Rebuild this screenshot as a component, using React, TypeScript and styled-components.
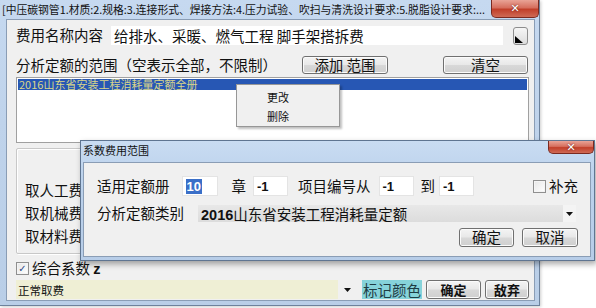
import React from "react";
import styled, { createGlobalStyle } from "styled-components";

const Global = createGlobalStyle`
  html, body { margin: 0; padding: 0; background: #ffffff; }
  body { font-family: "Noto Sans CJK SC", "Noto Sans", sans-serif; }
  * { box-sizing: border-box; }
`;

const FONT = `"Noto Sans CJK SC", "Noto Sans", sans-serif`;

const Stage = styled.div`
  position: relative;
  width: 596px;
  height: 308px;
  overflow: hidden;
  background: #ffffff;
`;

const MainWindow = styled.div`
  width: 540px;
  height: 306px;
  display: flex;
  flex-direction: column;
  background: linear-gradient(180deg, #c6d9f0 0%, #bfd3eb 40%, #b9cee7 100%);
  border-right: 1px solid #6d829c;
  border-bottom: 1px solid #6d829c;
  box-shadow: 1px 1px 3px rgba(0, 0, 0, 0.2);
`;

const TitleBar = styled.div`
  height: 19px;
  display: flex;
  align-items: flex-start;
  padding-left: 2px;
  flex-shrink: 0;
`;

const TitleText = styled.div<{ $size: number }>`
  flex: 1;
  min-width: 0;
  font-family: ${FONT};
  font-size: ${(p) => p.$size}px;
  line-height: 16px;
  color: #111;
  white-space: nowrap;
  overflow: hidden;
  padding-top: 1px;
`;

const CloseBtn = styled.div<{ $w: number; $h: number }>`
  width: ${(p) => p.$w}px;
  height: ${(p) => p.$h}px;
  flex-shrink: 0;
  border: 1px solid #7a2a20;
  border-top: none;
  border-radius: 0 0 5px 5px;
  background: linear-gradient(180deg, #e9a396 0%, #d66f5e 45%, #c13f2a 55%, #cf6a55 100%);
  display: flex;
  align-items: center;
  justify-content: center;
  color: #fff;
  font-family: "DejaVu Sans", sans-serif;
  font-weight: bold;
  font-size: 11px;
  line-height: 1;
  text-shadow: 0 0 2px #5a1a10;
`;

const Client = styled.div`
  flex: 1;
  margin: 0 4px 4px 6px;
  background: #f0f0f0;
  border: 1px solid #8a9db5;
  padding: 4px 6px 0 9px;
  display: flex;
  flex-direction: column;
`;

const Label = styled.span<{ $size?: number; $ml?: number }>`
  font-family: ${FONT};
  font-size: ${(p) => p.$size ?? 14.5}px;
  margin-left: ${(p) => p.$ml ?? 0}px;
  color: #111;
  white-space: nowrap;
  line-height: 1;
  flex-shrink: 0;
  b {
    font-family: "Liberation Sans", sans-serif;
    font-weight: bold;
  }
`;

const Row = styled.div<{ $mt: number; $h: number }>`
  display: flex;
  align-items: center;
  margin-top: ${(p) => p.$mt}px;
  height: ${(p) => p.$h}px;
  flex-shrink: 0;
`;

const TextField = styled.div<{ $w: number; $ml: number }>`
  width: ${(p) => p.$w}px;
  height: 100%;
  margin-left: ${(p) => p.$ml}px;
  background: #fff;
  border: 1px solid #f0f0f0;
  display: flex;
  align-items: center;
  padding-left: 3px;
  font-family: ${FONT};
  font-size: 14.5px;
  color: #111;
  white-space: nowrap;
  flex-shrink: 0;
`;

const DotButton = styled.div`
  width: 15px;
  height: 18px;
  margin-left: 9px;
  border: 1px solid #8d8d8d;
  border-radius: 3px;
  background: linear-gradient(180deg, #f6f6f6, #dcdcdc);
  position: relative;
  overflow: hidden;
  flex-shrink: 0;
`;

const Spacer = styled.div`
  flex: 1;
`;

const PushButton = styled.div<{ $w: number; $ml?: number; $bold?: boolean; $size?: number }>`
  width: ${(p) => p.$w}px;
  height: 100%;
  margin-left: ${(p) => p.$ml ?? 0}px;
  flex-shrink: 0;
  border: 1px solid #707070;
  border-radius: 3px;
  background: linear-gradient(180deg, #f4f4f4 0%, #e8e8e8 48%, #d8d8d8 52%, #cfcfcf 100%);
  box-shadow: inset 0 0 0 1px #fbfbfb;
  display: flex;
  align-items: center;
  justify-content: center;
  font-family: ${FONT};
  font-size: ${(p) => p.$size ?? 14.5}px;
  font-weight: ${(p) => (p.$bold ? 700 : 400)};
  color: #111;
  white-space: nowrap;
  line-height: 1;
`;

const ListBox = styled.div`
  margin-top: 3px;
  width: 513px;
  height: 66px;
  flex-shrink: 0;
  background: #fff;
  border: 1px solid #a0a0a0;
  padding: 1px;
`;

const ListItem = styled.div<{ $selected?: boolean }>`
  height: 11px;
  background: ${(p) => (p.$selected ? "#2757b4" : "transparent")};
  color: ${(p) => (p.$selected ? "#d9d58a" : "#111")};
  font-family: ${FONT};
  font-size: 11px;
  line-height: 11px;
  padding-left: 1px;
  white-space: nowrap;
`;

const GroupBox = styled.div`
  margin-top: 5px;
  width: 513px;
  height: 106px;
  flex-shrink: 0;
  border: 1px solid #c8c8c8;
  box-shadow: inset 1px 1px 0 #fff, 1px 1px 0 #fff;
  border-radius: 2px;
  padding: 30px 0 0 8px;
  display: flex;
  flex-direction: column;
`;

const GroupLine = styled.div`
  height: 23px;
  display: flex;
  align-items: center;
`;

const CheckBox = styled.div`
  width: 13px;
  height: 13px;
  border: 1px solid #8f8f8f;
  background: linear-gradient(135deg, #e6e6e6, #ffffff);
  box-shadow: inset 0 0 0 1px #f4f4f4;
  display: flex;
  align-items: center;
  justify-content: center;
  color: #2b4a8a;
  font-family: "DejaVu Sans", sans-serif;
  font-size: 10px;
  line-height: 1;
  font-weight: bold;
  flex-shrink: 0;
`;

const ComboField = styled.div<{ $w: number }>`
  width: ${(p) => p.$w}px;
  height: 100%;
  display: flex;
  align-items: center;
  background: #f0f0f0;
  flex-shrink: 0;
`;

const YellowText = styled.div`
  flex: 1;
  height: 100%;
  background: #efefd5;
  display: flex;
  align-items: center;
  padding-left: 2px;
  font-family: ${FONT};
  font-size: 11.5px;
  color: #111;
`;

const ArrowSlot = styled.div<{ $w: number; $bg?: string }>`
  width: ${(p) => p.$w}px;
  height: 100%;
  background: ${(p) => p.$bg ?? "transparent"};
  display: flex;
  align-items: center;
  justify-content: center;
  flex-shrink: 0;
`;

const MarkColor = styled.div`
  height: 100%;
  margin-left: 6px;
  padding: 0 1px;
  background: #86d3da;
  display: flex;
  align-items: center;
  font-family: ${FONT};
  font-size: 14.5px;
  color: #1e3c44;
  white-space: nowrap;
  flex-shrink: 0;
`;

const ContextMenu = styled.div`
  position: absolute;
  left: 236px;
  top: 84px;
  width: 104px;
  height: 43px;
  background: #f0f0f0;
  border: 1px solid #979797;
  box-shadow: 2px 2px 2px rgba(0, 0, 0, 0.25);
  padding: 2px 0 0 30px;
  display: flex;
  flex-direction: column;
`;

const MenuItem = styled.div`
  height: 19px;
  display: flex;
  align-items: center;
  font-family: ${FONT};
  font-size: 11px;
  color: #111;
`;

const Dialog = styled.div`
  position: absolute;
  left: 80px;
  top: 140px;
  width: 515px;
  height: 121px;
  display: flex;
  flex-direction: column;
  background: linear-gradient(180deg, #c9dcf2 0%, #bcd2ec 30%, #b7cde8 100%);
  border: 1px solid #5f7591;
  box-shadow: 2px 3px 6px rgba(0, 0, 0, 0.35);
`;

const DialogTitle = styled.div`
  height: 21px;
  display: flex;
  align-items: flex-start;
  padding-left: 2px;
  flex-shrink: 0;
`;

const DialogClient = styled.div`
  flex: 1;
  margin: 0 3px 3px 2px;
  background: #f0f0f0;
  border: 1px solid #8a9db5;
  padding: 0 12px 0 13px;
  display: flex;
  flex-direction: column;
`;

const SmallInput = styled.div<{ $w: number; $ml: number }>`
  width: ${(p) => p.$w}px;
  height: 100%;
  margin-left: ${(p) => p.$ml}px;
  background: #fff;
  border: 1px solid #e4e4e4;
  display: flex;
  align-items: center;
  padding-left: 3px;
  font-family: "Liberation Sans", sans-serif;
  font-weight: bold;
  font-size: 13px;
  color: #111;
  flex-shrink: 0;
`;

const Selected = styled.span`
  background: #3a6fc8;
  color: #fff;
  padding: 0 1px;
  line-height: 15px;
`;

const TypeCombo = styled.div`
  width: 378px;
  height: 100%;
  margin-left: 14px;
  display: flex;
  align-items: center;
  background: linear-gradient(180deg, #e8e8e8, #dcdcdc);
  flex-shrink: 0;
`;

const TypeText = styled.div`
  flex: 1;
  padding-left: 3px;
  font-family: ${FONT};
  font-size: 14.5px;
  color: #111;
  white-space: nowrap;
  b {
    font-family: "Liberation Sans", sans-serif;
    font-weight: bold;
  }
`;

const Arrow = () => (
  <svg width="7" height="4" viewBox="0 0 7 4">
    <polygon points="0,0 7,0 3.5,4" fill="#111" />
  </svg>
);

const Corner = () => (
  <svg width="13" height="16" viewBox="0 0 13 16" style={{ position: "absolute", left: 0, top: 0 }}>
    <polygon points="1,8 1,15 9,15" fill="#000" />
  </svg>
);

export default function App() {
  return (
    <Stage>
      <Global />
      <MainWindow>
        <TitleBar>
          <TitleText $size={10.8}>
            [中压碳钢管1.材质:2.规格:3.连接形式、焊接方法:4.压力试验、吹扫与清洗设计要求:5.脱脂设计要求:...
          </TitleText>
          <CloseBtn $w={48} $h={18}>✕</CloseBtn>
        </TitleBar>
        <Client>
          <Row $mt={1} $h={21}>
            <Label>费用名称内容</Label>
            <TextField $w={394} $ml={7}>给排水、采暖、燃气工程 脚手架搭拆费</TextField>
            <DotButton>
              <Corner />
            </DotButton>
          </Row>
          <Row $mt={10} $h={18}>
            <Label>分析定额的范围（空表示全部，不限制）</Label>
            <Spacer />
            <PushButton $w={86}>添加 范围</PushButton>
            <PushButton $w={85} $ml={55}>清空</PushButton>
          </Row>
          <ListBox>
            <ListItem $selected>2016山东省安装工程消耗量定额全册</ListItem>
          </ListBox>
          <GroupBox>
            <GroupLine><Label>取人工费</Label></GroupLine>
            <GroupLine><Label>取机械费</Label></GroupLine>
            <GroupLine><Label>取材料费</Label></GroupLine>
          </GroupBox>
          <Row $mt={8} $h={13}>
            <CheckBox>✓</CheckBox>
            <Label $ml={3}>
              综合系数 <b>z</b>
            </Label>
          </Row>
          <Row $mt={5} $h={19}>
            <ComboField $w={340}>
              <YellowText>正常取费</YellowText>
              <ArrowSlot $w={18}>
                <Arrow />
              </ArrowSlot>
            </ComboField>
            <MarkColor>标记颜色</MarkColor>
            <PushButton $w={55} $ml={4} $bold $size={13}>确定</PushButton>
            <PushButton $w={44} $ml={4} $bold $size={13}>敌弃</PushButton>
          </Row>
        </Client>
      </MainWindow>

      <ContextMenu>
        <MenuItem>更改</MenuItem>
        <MenuItem>删除</MenuItem>
      </ContextMenu>

      <Dialog>
        <DialogTitle>
          <TitleText $size={11}>系数费用范围</TitleText>
          <CloseBtn $w={46} $h={13}>✕</CloseBtn>
        </DialogTitle>
        <DialogClient>
          <Row $mt={13} $h={20}>
            <Label>适用定额册</Label>
            <SmallInput $w={36} $ml={12}><Selected>10</Selected></SmallInput>
            <Label $ml={14}>章</Label>
            <SmallInput $w={35} $ml={7}>-1</SmallInput>
            <Label $ml={10}>项目编号从</Label>
            <SmallInput $w={35} $ml={8}>-1</SmallInput>
            <Label $ml={7}>到</Label>
            <SmallInput $w={35} $ml={4}>-1</SmallInput>
            <Spacer />
            <CheckBox />
            <Label $ml={3}>补充</Label>
          </Row>
          <Row $mt={9} $h={17}>
            <Label>分析定额类别</Label>
            <TypeCombo>
              <TypeText><b>2016</b>山东省安装工程消耗量定额</TypeText>
              <ArrowSlot $w={13} $bg="#f4f4f4">
                <Arrow />
              </ArrowSlot>
            </TypeCombo>
          </Row>
          <Row $mt={6} $h={19}>
            <Spacer />
            <PushButton $w={55}>确定</PushButton>
            <PushButton $w={56} $ml={8}>取消</PushButton>
          </Row>
        </DialogClient>
      </Dialog>
    </Stage>
  );
}
